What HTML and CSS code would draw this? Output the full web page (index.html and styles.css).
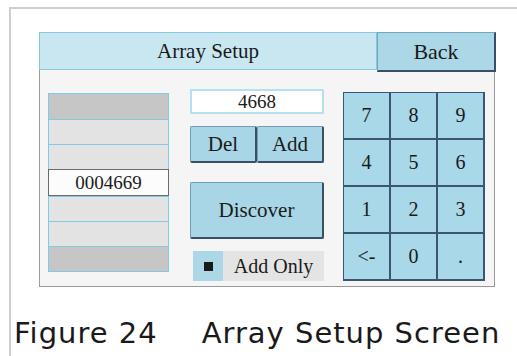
FILE: index.html
```html
<!DOCTYPE html>
<html lang="en">
<head>
    <meta charset="UTF-8">
    <meta name="viewport" content="width=device-width, initial-scale=1.0">
    <title>Array Setup</title>
    <link rel="stylesheet" href="styles.css">
</head>
<body>
    <div class="page">
        <div class="screen">
            <div class="header">
                <div class="title">Array Setup</div>
                <div class="back">Back</div>
            </div>
            <div class="content">
                <div class="list">
                    <div class="row dark"></div>
                    <div class="row"></div>
                    <div class="row"></div>
                    <div class="row selected">0004669</div>
                    <div class="row"></div>
                    <div class="row"></div>
                    <div class="row dark"></div>
                </div>
                <div class="middle">
                    <div class="entry">4668</div>
                    <div class="pair">
                        <div class="btn">Del</div>
                        <div class="btn">Add</div>
                    </div>
                    <div class="btn discover">Discover</div>
                    <div class="check">
                        <span class="box"><span class="mark"></span></span>
                        <span class="check-label">Add Only</span>
                    </div>
                </div>
                <div class="keypad">
                    <div class="key">7</div>
                    <div class="key">8</div>
                    <div class="key">9</div>
                    <div class="key">4</div>
                    <div class="key">5</div>
                    <div class="key">6</div>
                    <div class="key">1</div>
                    <div class="key">2</div>
                    <div class="key">3</div>
                    <div class="key">&lt;-</div>
                    <div class="key">0</div>
                    <div class="key">.</div>
                </div>
            </div>
        </div>
        <p class="caption">Figure 24<span class="gap"></span>Array Setup Screen</p>
    </div>
</body>
</html>
```

FILE: styles.css
```css
body {
    margin: 0;
    background-color: white;
    color: #1a1a1a;
}

.page {
    margin: 7px 0 0 9px;
    height: 349px;
    border-top: 2px solid #cfcfcf;
    border-left: 2px solid #cfcfcf;
    box-sizing: border-box;
    overflow: hidden;
}

.screen {
    margin: 23px 0 0 28px;
    width: 456px;
    height: 255px;
    background-color: #f5f5f5;
    border: 1px solid #9a9a9a;
    border-top: none;
    box-sizing: border-box;
    font-family: "Liberation Serif", "DejaVu Serif", "Times New Roman", serif;
}

.header {
    display: flex;
    height: 38px;
}

.title {
    width: 338px;
    background-color: #c9e7f1;
    border: 1px solid #86c8de;
    box-sizing: border-box;
    margin-left: -1px;
    display: flex;
    align-items: center;
    justify-content: center;
    font-size: 21px;
}

.back {
    width: 119px;
    height: 40px;
    margin-right: -2px;
    background-color: #acd7e6;
    border: 1px solid #6fa9c0;
    border-right: 2px solid #3a4f66;
    border-bottom: 2px solid #3a4f66;
    box-sizing: border-box;
    display: flex;
    align-items: center;
    justify-content: center;
    font-size: 22px;
}

.content {
    display: flex;
    align-items: flex-start;
}

.list {
    margin: 23px 0 0 8px;
    width: 121px;
    border: 1px solid #7fcce2;
    box-sizing: border-box;
    display: flex;
    flex-direction: column;
}

.row {
    height: 24px;
    background-color: #e3e3e3;
    border-top: 1px solid #7fcce2;
}

.row:first-child {
    border-top: none;
    height: 25px;
}

.row.dark {
    background-color: #c6c6c6;
}

.row.selected {
    height: 25px;
    margin: 0 -1px;
    background-color: #fcfcfc;
    border: 1px solid #6a6a6a;
    display: flex;
    align-items: center;
    justify-content: center;
    font-size: 19px;
}

.middle {
    margin: 19px 0 0 21px;
    width: 134px;
    display: flex;
    flex-direction: column;
}

.entry {
    height: 25px;
    background-color: white;
    border: 2px solid #b5e0ee;
    box-sizing: border-box;
    display: flex;
    align-items: center;
    justify-content: center;
    font-size: 19px;
}

.pair {
    display: flex;
    margin-top: 12px;
}

.btn {
    flex: 1;
    height: 37px;
    background-color: #a9d6e6;
    border: 1px solid #6f9fb5;
    border-right: 2px solid #3a4f66;
    border-bottom: 2px solid #3a4f66;
    border-radius: 2px;
    box-sizing: border-box;
    display: flex;
    align-items: center;
    justify-content: center;
    font-size: 21px;
}

.discover {
    flex: none;
    height: 57px;
    margin-top: 19px;
}

.check {
    display: flex;
    margin: 12px 0 0 3px;
    height: 30px;
}

.box {
    width: 30px;
    background-color: #acd7e6;
    display: flex;
    align-items: center;
    justify-content: center;
}

.mark {
    width: 9px;
    height: 9px;
    background-color: #1a1a1a;
}

.check-label {
    flex: 1;
    background-color: #e4e4e4;
    display: flex;
    align-items: center;
    justify-content: center;
    font-size: 20px;
}

.keypad {
    margin: 22px 0 0 19px;
    width: 139px;
    display: grid;
    grid-template-columns: repeat(3, 1fr);
    grid-auto-rows: 45px;
    background-color: #3a5672;
    border: 1px solid #3a5672;
    border-right-width: 2px;
    border-bottom-width: 2px;
    gap: 2px;
}

.key {
    background-color: #a9d8e8;
    display: flex;
    align-items: center;
    justify-content: center;
    font-size: 20px;
}

.caption {
    margin: 29px 0 0 3px;
    font-family: "DejaVu Sans", Verdana, sans-serif;
    font-size: 29px;
    letter-spacing: 1px;
    color: #1a1a1a;
    white-space: nowrap;
}

.gap {
    display: inline-block;
    width: 44px;
}
```
